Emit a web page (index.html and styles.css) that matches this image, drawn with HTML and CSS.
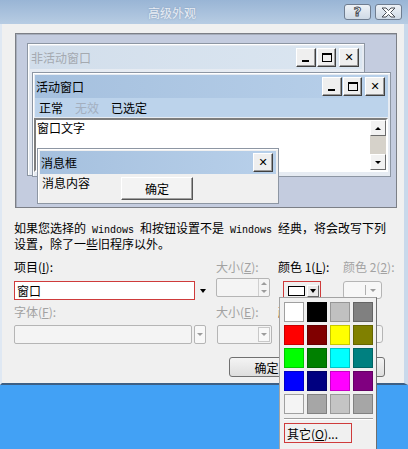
FILE: index.html
```html
<!DOCTYPE html>
<html lang="zh-CN">
  <head>
    <meta charset="UTF-8" />
    <meta name="viewport" content="width=device-width, initial-scale=1.0" />
    <title>高级外观</title>
    <link rel="stylesheet" href="styles.css">
  </head>
  <body>
    <div class="screen">
      <div class="dialog">
        <div class="titlebar">
          <span class="title">高级外观</span>
          <div class="caption-btns">
            <span class="cap-btn help">?</span>
            <span class="cap-btn">
              <svg width="17" height="11" viewBox="0 0 17 11">
                <path d="M2 1h4l2.5 2.6L11 1h4l-4.5 4.5L15 10h-4l-2.5-2.6L6 10H2l4.5-4.5z" fill="#fff" stroke="#4a4f57" stroke-width="1"/>
              </svg>
            </span>
          </div>
        </div>

        <div class="body">
          <div class="preview">
            <div class="win inactive">
              <div class="caption">
                <span>非活动窗口</span>
                <div class="ctl">
                  <span class="ctl-btn"><i class="ico-min"></i></span>
                  <span class="ctl-btn max"><i class="ico-max"></i></span>
                  <span class="ctl-btn close"><i class="ico-x">✕</i></span>
                </div>
              </div>
            </div>

            <div class="win active">
              <div class="caption">
                <span>活动窗口</span>
                <div class="ctl">
                  <span class="ctl-btn"><i class="ico-min"></i></span>
                  <span class="ctl-btn max"><i class="ico-max"></i></span>
                  <span class="ctl-btn close"><i class="ico-x">✕</i></span>
                </div>
              </div>
              <div class="menubar">
                <span>正常</span>
                <span class="dim">无效</span>
                <span>已选定</span>
              </div>
              <div class="textarea">
                <span class="wintext">窗口文字</span>
                <div class="scrollbar">
                  <span class="sb-btn"><i class="tri up"></i></span>
                  <span class="sb-track"></span>
                  <span class="sb-btn"><i class="tri"></i></span>
                </div>
              </div>
            </div>

            <div class="win msgbox">
              <div class="caption">
                <span>消息框</span>
                <div class="ctl">
                  <span class="ctl-btn close"><i class="ico-x">✕</i></span>
                </div>
              </div>
              <div class="msg-body">
                <span>消息内容</span>
                <span class="msg-ok">确定</span>
              </div>
            </div>
          </div>

          <p class="note">如果您选择的<span class="latin"> Windows </span>和按钮设置不是<span class="latin"> Windows </span>经典，将会改写下列<br>设置，除了一些旧程序以外。</p>

          <div class="fields">
            <label>项目(<u>I</u>):</label>
            <label class="off">大小(<u>Z</u>):</label>
            <label>颜色 1(<u>L</u>):</label>
            <label class="off">颜色 2(<u>2</u>):</label>

            <div class="combo">
              <span class="combo-text marked">窗口</span>
              <span class="combo-arrow"><i class="tri"></i></span>
            </div>
            <div class="spin off-box">
              <span class="spin-btns"><i class="tri up grey"></i><i class="tri grey"></i></span>
            </div>
            <div class="color-btn marked">
              <span class="swatch"></span>
              <span class="mini-arrow"><i class="tri"></i></span>
            </div>
            <div class="color2 off-box">
              <span class="sep"></span><i class="tri grey"></i>
            </div>

            <label class="off row2">字体(<u>F</u>):</label>
            <label class="off row2">大小(<u>E</u>):</label>
            <label class="row2 wide">颜色(<u>R</u>):</label>

            <div class="font-combo">
              <span class="off-box field"></span>
              <span class="off-box arrow-box"><i class="tri grey"></i></span>
            </div>
            <div class="size-combo off-box">
              <span class="arrow-box inner"><i class="tri grey"></i></span>
            </div>
            <div class="font-tools wide">
              <span class="tool off-box"></span>
              <span class="tool off-box"></span>
            </div>
          </div>

          <div class="actions">
            <span class="btn">确定</span>
            <span class="btn">取消</span>
          </div>
        </div>
      </div>

      <div class="palette">
        <div class="grid">
          <span class="cell c-white" style="background:#ffffff"></span>
          <span class="cell" style="background:#000000"></span>
          <span class="cell" style="background:#c0c0c0"></span>
          <span class="cell" style="background:#808080"></span>
          <span class="cell" style="background:#ff0000"></span>
          <span class="cell" style="background:#800000"></span>
          <span class="cell" style="background:#ffff00"></span>
          <span class="cell" style="background:#808000"></span>
          <span class="cell" style="background:#00ff00"></span>
          <span class="cell" style="background:#008000"></span>
          <span class="cell" style="background:#00ffff"></span>
          <span class="cell" style="background:#008080"></span>
          <span class="cell" style="background:#0000ff"></span>
          <span class="cell" style="background:#000080"></span>
          <span class="cell" style="background:#ff00ff"></span>
          <span class="cell" style="background:#800080"></span>
          <span class="cell c-white" style="background:#f4f4f4"></span>
          <span class="cell" style="background:#a6a6a6"></span>
          <span class="cell" style="background:#c4c4c4"></span>
          <span class="cell" style="background:#a6a6a6"></span>
        </div>
        <div class="divider"></div>
        <span class="other">其它(<u>O</u>)...</span>
      </div>
    </div>
  </body>
</html>
```

FILE: styles.css
```css
* {
  box-sizing: border-box;
}

body {
  margin: 0;
  background: #42a1f5;
  font-family: "Noto Sans CJK SC", "Liberation Sans", sans-serif;
  font-size: 12px;
  color: #000;
  overflow: hidden;
}

.screen {
  position: relative;
  width: 408px;
  height: 449px;
}

u {
  text-decoration: underline;
}

.dialog {
  width: 408px;
  border-left: 2px solid #dfe8f3;
  border-right: 4px solid #c9d9eb;
  border-bottom: 2px solid #3d5f84;
  background: #f0f0f0;
}

/* title bar */
.titlebar {
  display: flex;
  align-items: center;
  height: 24px;
  margin: 0 -4px 0 -2px;
  background: linear-gradient(#99b5d5, #b7cce3);
}

.title {
  flex: 1;
  text-align: center;
  color: #e8edf4;
  font-size: 12px;
  text-shadow: 0 0 2px rgba(80, 100, 130, 0.4);
}

.caption-btns {
  display: flex;
  gap: 4px;
  margin-right: 6px;
}

.cap-btn {
  display: flex;
  align-items: center;
  justify-content: center;
  width: 27px;
  height: 16px;
  border: 1px solid #6f7d90;
  border-radius: 3px;
  background: linear-gradient(#eef2f7, #cfdae6);
}

.cap-btn.help {
  font-family: "DejaVu Sans", sans-serif;
  font-weight: bold;
  font-size: 13px;
  line-height: 14px;
  color: #fff;
  -webkit-text-stroke: 1px #4a4f57;
}

/* body */
.body {
  height: 359px;
  padding: 9px 0 0 12px;
}

.preview {
  position: relative;
  width: 382px;
  height: 175px;
  margin-left: 1px;
  border: 1px solid #7c7f86;
  box-shadow: inset 1px 1px 0 #a6adbb;
  background: #c4ccdf;
}

.win {
  position: absolute;
  border: 1px solid #8d96a3;
  box-shadow: inset 1px 1px 0 #fff;
  padding: 2px;
  background: #e6ebf2;
}

.win.inactive {
  left: 11px;
  top: 9px;
  width: 338px;
  height: 133px;
}

.win.active {
  left: 16px;
  top: 38px;
  width: 359px;
}

.win.msgbox {
  left: 21px;
  top: 114px;
  width: 242px;
  height: 56px;
  background: #f0f0f0;
}

.caption {
  display: flex;
  align-items: center;
  justify-content: space-between;
  height: 23px;
  padding: 0 3px 0 1px;
  background: linear-gradient(90deg, #a5c0de, #b8d0ea);
}

.inactive .caption {
  background: linear-gradient(90deg, #d2deeb, #dbe6f1);
  color: #a4a9b0;
}

.ctl {
  display: flex;
}

.ctl-btn {
  display: flex;
  align-items: center;
  justify-content: center;
  width: 20px;
  height: 19px;
  color: #000;
  background: #efefef;
  border: 1px solid;
  border-color: #fff #404040 #404040 #fff;
  box-shadow: inset -1px -1px 0 #9a9a9a;
}

.ctl-btn.max {
  width: 19px;
  margin-left: 1px;
}

.ctl-btn.close {
  margin-left: 3px;
}

.ico-min {
  width: 7px;
  height: 2px;
  margin-top: 7px;
  margin-right: 2px;
  background: #000;
}

.ico-max {
  width: 10px;
  height: 9px;
  border: 1px solid #000;
  border-top-width: 2px;
}

.ico-x {
  font-style: normal;
  font-family: "DejaVu Sans", sans-serif;
  font-weight: bold;
  font-size: 11px;
  line-height: 11px;
}

.menubar {
  display: flex;
  gap: 12px;
  height: 19px;
  align-items: center;
  padding-left: 4px;
  background: #bcd3eb;
}

.menubar .dim {
  color: #a3afbf;
}

.textarea {
  display: flex;
  justify-content: space-between;
  height: 54px;
  margin: 1px 0 2px -1px;
  border: 2px solid;
  border-color: #7d7d7d #fff #fff #7d7d7d;
  background: #fff;
}

.wintext {
  padding: 0 0 0 1px;
  line-height: 16px;
}

.scrollbar {
  display: flex;
  flex-direction: column;
  width: 16px;
}

.sb-btn {
  display: flex;
  align-items: center;
  justify-content: center;
  height: 16px;
  background: #f2f2f2;
  border: 1px solid;
  border-color: #fff #6b6b6b #6b6b6b #fff;
}

.sb-track {
  flex: 1;
  background: #d6d2ca;
}

.tri {
  width: 0;
  height: 0;
  border-left: 3px solid transparent;
  border-right: 3px solid transparent;
  border-top: 3px solid #000;
}

.tri.up {
  border-top: none;
  border-bottom: 3px solid #000;
}

.tri.grey {
  border-top-color: #9c9c9c;
}

.tri.up.grey {
  border-bottom-color: #9c9c9c;
}

.msg-body {
  display: flex;
  align-items: flex-start;
  padding: 1px 0 0 2px;
}

.msg-body > span:first-child {
  line-height: 16px;
}

.msg-ok {
  display: flex;
  align-items: center;
  justify-content: center;
  width: 72px;
  height: 23px;
  margin: 2px 0 0 31px;
  background: #f3f3f3;
  border: 1px solid;
  border-color: #fff #555 #555 #fff;
  box-shadow: inset -1px -1px 0 #a0a0a0;
}

/* description and fields */
.note {
  margin: 13px 0 0;
  line-height: 13px;
  white-space: nowrap;
}

.latin {
  font-family: "Liberation Mono", monospace;
  font-size: 10px;
  white-space: pre;
}

.fields {
  display: grid;
  grid-template-columns: 196px 56px 59px 39px;
  column-gap: 6px;
  margin-top: 10px;
}

.fields label {
  line-height: 13px;
  margin-bottom: 8px;
  white-space: nowrap;
}

.fields label.row2 {
  margin: 5px 0 7px;
}

.fields label.off {
  color: #a2a2a2;
}

.fields .wide {
  grid-column: span 2;
}

.off-box {
  border: 1px solid #b5b5b5;
  border-radius: 2px;
  background: #f4f4f4;
}

.marked {
  border: 1px solid #cf3b3b !important;
}

.combo {
  display: flex;
  height: 19px;
}

.combo-text {
  flex: 1;
  background: #fff;
  padding-left: 2px;
  line-height: 17px;
}

.combo-arrow {
  display: flex;
  align-items: center;
  justify-content: center;
  width: 15px;
}

.combo-arrow .tri,
.mini-arrow .tri {
  border-left-width: 3px;
  border-right-width: 3px;
  border-top-width: 4px;
}

.spin {
  display: flex;
  justify-content: flex-end;
  height: 19px;
  margin-top: -3px;
  width: 54px;
}

.spin-btns {
  display: flex;
  flex-direction: column;
  justify-content: space-around;
  align-items: center;
  width: 11px;
  border-left: 1px solid #cfcfcf;
}

.color-btn {
  display: flex;
  align-items: center;
  gap: 2px;
  height: 19px;
  width: 38px;
  margin-left: 5px;
  padding-left: 4px;
  background: #f0f0f0;
}

.swatch {
  width: 17px;
  height: 10px;
  background: #fff;
  border: 1px solid #000;
}

.mini-arrow {
  display: flex;
  align-items: center;
  justify-content: center;
  width: 12px;
  height: 12px;
  background: #e9e9e9;
  border: 1px solid;
  border-color: #fff #666 #666 #fff;
}

.color2 {
  display: flex;
  align-items: center;
  height: 18px;
  border-radius: 3px;
  background: #f7f7f7;
  padding-left: 21px;
  gap: 4px;
}

.color2 .sep {
  width: 1px;
  height: 10px;
  background: #b0b0b0;
}

.font-combo {
  display: flex;
  gap: 2px;
  height: 19px;
  width: 192px;
}

.font-combo .field {
  flex: 1;
}

.arrow-box {
  display: flex;
  align-items: center;
  justify-content: center;
  width: 12px;
  background: #f8f8f8;
}

.size-combo {
  display: flex;
  justify-content: flex-end;
  width: 55px;
  height: 19px;
  margin-left: 1px;
  padding: 1px;
}

.arrow-box.inner {
  border: 1px solid #c8c8c8;
}

.font-tools {
  display: flex;
  justify-content: space-between;
  height: 18px;
  margin-left: 1px;
  width: 104px;
}

.tool {
  width: 38px;
  border-radius: 3px;
}

.actions {
  display: flex;
  gap: 6px;
  margin: 13px 0 0 215px;
}

.btn {
  display: flex;
  align-items: center;
  justify-content: center;
  width: 75px;
  height: 20px;
  border: 1px solid #707070;
  border-radius: 3px;
  background: linear-gradient(#f4f4f4, #dedede);
}

/* colour drop-down */
.palette {
  position: absolute;
  left: 279px;
  top: 297px;
  width: 98px;
  height: 160px;
  padding: 4px 0 0 4px;
  background: #f0f0f0;
  border: 1px solid #a3a3a3;
  border-right-color: #6f6f6f;
}

.grid {
  display: grid;
  grid-template-columns: repeat(4, 20px);
  gap: 3px;
}

.cell {
  height: 20px;
  box-shadow: inset 0 0 0 1px rgba(0, 0, 0, 0.22);
}

.cell.c-white {
  box-shadow: inset 0 0 0 1px #a0a0a0;
}

.divider {
  width: 89px;
  margin: 4px 0 3px;
  border-top: 1px solid #a0a0a0;
  border-bottom: 1px solid #fff;
}

.other {
  display: flex;
  align-items: center;
  width: 68px;
  height: 20px;
  padding-left: 2px;
  border: 1px solid #cf3b3b;
  white-space: nowrap;
}
```
